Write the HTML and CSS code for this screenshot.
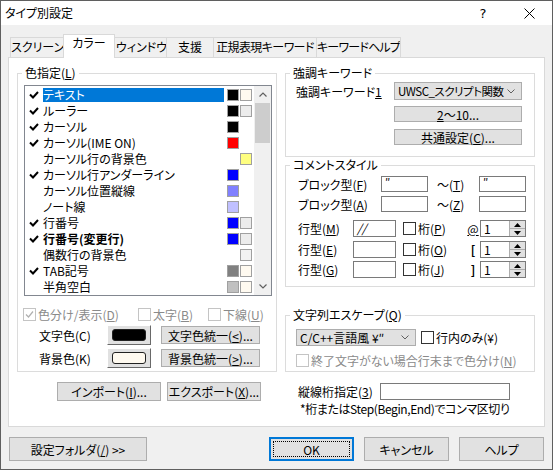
FILE: index.html
```html
<!DOCTYPE html>
<html lang="ja">
<head>
<meta charset="utf-8">
<title>タイプ別設定</title>
<link rel="stylesheet" href="styles.css">
</head>
<body>
<div class="window">
  <div class="titlebar">
    <div class="title">タイプ別設定</div>
    <div class="tb-btn">?</div>
    <div class="tb-btn"><svg width="11" height="11" viewBox="0 0 11 11"><path d="M0.5 0.5L10.5 10.5M10.5 0.5L0.5 10.5" stroke="#000" stroke-width="1" fill="none"/></svg></div>
  </div>
  <div class="content">
    <div class="tabs">
      <div class="tab t1">スクリーン</div>
      <div class="tab t2 active">カラー</div>
      <div class="tab t3">ウィンドウ</div>
      <div class="tab t4">支援</div>
      <div class="tab t5">正規表現キーワード</div>
      <div class="tab t6">キーワードヘルプ</div>
    </div>
    <div class="panel">
      <div class="col-left">
        <fieldset class="group g-color">
          <legend>色指定(<u>L</u>)</legend>
          <div class="listbox">
            <div class="rows">
              <div class="item"><span class="chk"><svg width="10" height="8" viewBox="0 0 10 8"><path d="M1 3.5L4 6.5L9 1" stroke="#000" stroke-width="2" fill="none"/></svg></span><span class="lbl"><span class="sel">テキスト</span></span><span class="sw c-black"></span><span class="sw c-cream"></span></div>
              <div class="item"><span class="chk"><svg width="10" height="8" viewBox="0 0 10 8"><path d="M1 3.5L4 6.5L9 1" stroke="#000" stroke-width="2" fill="none"/></svg></span><span class="lbl">ルーラー</span><span class="sw c-black"></span><span class="sw c-light"></span></div>
              <div class="item"><span class="chk"><svg width="10" height="8" viewBox="0 0 10 8"><path d="M1 3.5L4 6.5L9 1" stroke="#000" stroke-width="2" fill="none"/></svg></span><span class="lbl">カーソル</span><span class="sw c-black"></span><span class="sw none"></span></div>
              <div class="item"><span class="chk"><svg width="10" height="8" viewBox="0 0 10 8"><path d="M1 3.5L4 6.5L9 1" stroke="#000" stroke-width="2" fill="none"/></svg></span><span class="lbl">カーソル(IME ON)</span><span class="sw c-red"></span><span class="sw none"></span></div>
              <div class="item"><span class="chk"></span><span class="lbl">カーソル行の背景色</span><span class="sw none"></span><span class="sw c-yellow"></span></div>
              <div class="item"><span class="chk"><svg width="10" height="8" viewBox="0 0 10 8"><path d="M1 3.5L4 6.5L9 1" stroke="#000" stroke-width="2" fill="none"/></svg></span><span class="lbl">カーソル行アンダーライン</span><span class="sw c-blue"></span><span class="sw none"></span></div>
              <div class="item"><span class="chk"></span><span class="lbl">カーソル位置縦線</span><span class="sw c-blue2"></span><span class="sw none"></span></div>
              <div class="item"><span class="chk"></span><span class="lbl">ノート線</span><span class="sw c-blue3"></span><span class="sw none"></span></div>
              <div class="item"><span class="chk"><svg width="10" height="8" viewBox="0 0 10 8"><path d="M1 3.5L4 6.5L9 1" stroke="#000" stroke-width="2" fill="none"/></svg></span><span class="lbl">行番号</span><span class="sw c-blue"></span><span class="sw c-light"></span></div>
              <div class="item"><span class="chk"><svg width="10" height="8" viewBox="0 0 10 8"><path d="M1 3.5L4 6.5L9 1" stroke="#000" stroke-width="2" fill="none"/></svg></span><span class="lbl bold">行番号(変更行)</span><span class="sw c-blue"></span><span class="sw c-light"></span></div>
              <div class="item"><span class="chk"></span><span class="lbl">偶数行の背景色</span><span class="sw none"></span><span class="sw c-light2"></span></div>
              <div class="item"><span class="chk"><svg width="10" height="8" viewBox="0 0 10 8"><path d="M1 3.5L4 6.5L9 1" stroke="#000" stroke-width="2" fill="none"/></svg></span><span class="lbl">TAB記号</span><span class="sw c-gray"></span><span class="sw c-cream"></span></div>
              <div class="item"><span class="chk"></span><span class="lbl">半角空白</span><span class="sw c-silver"></span><span class="sw c-cream"></span></div>
            </div>
            <div class="vscroll">
              <div class="vs-btn"><svg width="8" height="5" viewBox="0 0 8 5"><path d="M0.5 4.5L4 1L7.5 4.5" stroke="#606060" stroke-width="1.2" fill="none"/></svg></div>
              <div class="vs-thumb"></div>
              <div class="vs-fill"></div>
              <div class="vs-btn"><svg width="8" height="5" viewBox="0 0 8 5"><path d="M0.5 0.5L4 4L7.5 0.5" stroke="#606060" stroke-width="1.2" fill="none"/></svg></div>
            </div>
          </div>
          <div class="flags">
            <div class="flag f1"><span class="cb dis"><svg width="11" height="11" viewBox="0 0 11 11"><path d="M2 5.5L4.5 8L9 2.5" stroke="#b0b0b0" stroke-width="1.2" fill="none"/></svg></span><span class="dis-text">色分け/表示(<u>D</u>)</span></div>
            <div class="flag f2"><span class="cb dis"></span><span class="dis-text">太字(<u>B</u>)</span></div>
            <div class="flag f3"><span class="cb dis"></span><span class="dis-text">下線(<u>U</u>)</span></div>
          </div>
          <div class="crow r1">
            <span class="clabel">文字色(C)</span>
            <span class="colorbtn"><span class="inner c-black"></span></span>
            <span class="btn unify">文字色統一(<u>&lt;</u>)...</span>
          </div>
          <div class="crow r2">
            <span class="clabel">背景色(K)</span>
            <span class="colorbtn"><span class="inner c-cream"></span></span>
            <span class="btn unify">背景色統一(<u>&gt;</u>)...</span>
          </div>
        </fieldset>
        <div class="iorow">
          <span class="btn b-import">インポート(<u>I</u>)...</span>
          <span class="btn b-export">エクスポート(<u>X</u>)...</span>
        </div>
      </div>
      <div class="col-right">
        <fieldset class="group g-kw">
          <legend>強調キーワード</legend>
          <div class="kwrow">
            <span class="kwlabel">強調キーワード<u>1</u></span>
            <span class="combo kwcombo"><span class="ctext">UWSC_スクリプト関数</span><svg width="8" height="5" viewBox="0 0 8 5"><path d="M0.5 0.5L4 4L7.5 0.5" stroke="#606060" stroke-width="1" fill="none"/></svg></span>
          </div>
          <span class="btn kwbtn b2"><span><u>2</u>～10...</span></span>
          <span class="btn kwbtn b3">共通設定(<u>C</u>)...</span>
        </fieldset>
        <fieldset class="group g-cm">
          <legend>コメントスタイル</legend>
          <div class="cmrow ra">
            <span class="cmlabel">ブロック型(<u>F</u>)</span>
            <span class="edit e-blk">″</span>
            <span class="tilde">～(<u>T</u>)</span>
            <span class="edit e-blk">″</span>
          </div>
          <div class="cmrow rb">
            <span class="cmlabel">ブロック型(<u>A</u>)</span>
            <span class="edit e-blk"></span>
            <span class="tilde">～(<u>Z</u>)</span>
            <span class="edit e-blk"></span>
          </div>
          <div class="cmrow rl rm">
            <span class="llabel">行型(<u>M</u>)</span>
            <span class="edit e-line">//</span>
            <span class="cb en"></span>
            <span class="keta">桁(<u>P</u>)</span>
            <span class="sym"><u>@</u></span>
            <span class="spin"><span class="val">1</span><span class="arrows"><span class="ar"><svg width="7" height="4" viewBox="0 0 7 4"><path d="M0 4L3.5 0L7 4Z" fill="#000"/></svg></span><span class="ar"><svg width="7" height="4" viewBox="0 0 7 4"><path d="M0 0L3.5 4L7 0Z" fill="#000"/></svg></span></span></span>
          </div>
          <div class="cmrow rl re">
            <span class="llabel">行型(<u>E</u>)</span>
            <span class="edit e-line"></span>
            <span class="cb en"></span>
            <span class="keta">桁(<u>O</u>)</span>
            <span class="sym bold">[</span>
            <span class="spin"><span class="val">1</span><span class="arrows"><span class="ar"><svg width="7" height="4" viewBox="0 0 7 4"><path d="M0 4L3.5 0L7 4Z" fill="#000"/></svg></span><span class="ar"><svg width="7" height="4" viewBox="0 0 7 4"><path d="M0 0L3.5 4L7 0Z" fill="#000"/></svg></span></span></span>
          </div>
          <div class="cmrow rl rg">
            <span class="llabel">行型(<u>G</u>)</span>
            <span class="edit e-line"></span>
            <span class="cb en"></span>
            <span class="keta">桁(<u>J</u>)</span>
            <span class="sym bold">]</span>
            <span class="spin"><span class="val">1</span><span class="arrows"><span class="ar"><svg width="7" height="4" viewBox="0 0 7 4"><path d="M0 4L3.5 0L7 4Z" fill="#000"/></svg></span><span class="ar"><svg width="7" height="4" viewBox="0 0 7 4"><path d="M0 0L3.5 4L7 0Z" fill="#000"/></svg></span></span></span>
          </div>
        </fieldset>
        <fieldset class="group g-esc">
          <legend>文字列エスケープ(<u>Q</u>)</legend>
          <div class="escrow">
            <span class="combo esccombo"><span class="ctext">C/C++言語風 ¥″</span><svg width="8" height="5" viewBox="0 0 8 5"><path d="M0.5 0.5L4 4L7.5 0.5" stroke="#606060" stroke-width="1" fill="none"/></svg></span>
            <span class="cb en"></span>
            <span class="inline-only">行内のみ(¥)</span>
          </div>
          <div class="escrow2">
            <span class="cb dis"></span>
            <span class="dis-text">終了文字がない場合行末まで色分け(<u>N</u>)</span>
          </div>
        </fieldset>
        <div class="vline">
          <span class="vlabel">縦線桁指定(<u>3</u>)</span>
          <span class="edit e-vline"></span>
        </div>
        <div class="note">*桁またはStep(Begin,End)でコンマ区切り</div>
      </div>
    </div>
    <div class="footer">
      <span class="btn fbtn b-folder">設定フォルダ(<u>/</u>) &gt;&gt;</span>
      <span class="spacer"></span>
      <span class="btn fbtn b-ok"><span class="focus">OK</span></span>
      <span class="btn fbtn b-cancel">キャンセル</span>
      <span class="btn fbtn b-help">ヘルプ</span>
    </div>
  </div>
</div>
</body>
</html>
```

FILE: styles.css
```css
* { box-sizing: border-box; }
html, body { margin: 0; padding: 0; }
body {
  font-family: "Noto Sans CJK JP", "Noto Sans", sans-serif;
  font-size: 12px;
  color: #000;
  background: #f0f0f0;
  font-feature-settings: "palt";
}
u { text-decoration: underline; text-underline-offset: 1px; }

.window {
  width: 553px;
  height: 470px;
  border: 1px solid #5f5f5f;
  background: #f0f0f0;
  display: flex;
  flex-direction: column;
  overflow: hidden;
}
.titlebar {
  height: 24px;
  flex: none;
  background: #fff;
  display: flex;
  align-items: center;
  padding-left: 4px;
}
.title { flex: 1; line-height: 16px; }
.tb-btn {
  width: 46px;
  height: 24px;
  display: flex;
  align-items: center;
  justify-content: center;
  font-family: "DejaVu Sans", sans-serif;
  font-size: 13px;
}

.content { flex: 1; padding: 9px 7px 0 7px; }

.tabs {
  display: flex;
  align-items: flex-end;
  height: 24px;
  padding-left: 2px;
  margin-bottom: -1px;
  position: relative;
  z-index: 1;
}
.tab {
  height: 21px;
  border: 1px solid #d9d9d9;
  background: #f0f0f0;
  line-height: 17px;
  text-align: center;
  white-space: nowrap;
  flex: none;
  overflow: hidden;
}
.t1 { width: 55px; }
.t2 { width: 52px; }
.t3 { width: 54px; padding-left: 2px; }
.t4 { width: 48px; margin-left: -1px; }
.t5 { width: 104px; margin-left: -1px; letter-spacing: -0.6px; }
.t6 { width: 85px; margin-left: -1px; letter-spacing: -0.8px; }
.tab.active {
  height: 24px;
  margin: 0 -2px;
  border-bottom: none;
  background: #fff;
  position: relative;
  z-index: 2;
  line-height: 15px;
}

.panel {
  height: 370px;
  border: 1px solid #d9d9d9;
  background: #fff;
  display: flex;
  gap: 8px;
  padding: 7px 9px 0 8px;
}
.col-left { width: 260px; flex: none; display: flex; flex-direction: column; }
.col-right { width: 250px; flex: none; display: flex; flex-direction: column; }

.group {
  margin: 0;
  border: 1px solid #dcdcdc;
  min-width: 0;
}
.group legend { line-height: 16px; padding: 0 3px; }

.g-color { height: 307px; padding: 4px 4px 0 6px; }
.g-color legend { margin-left: -2px; }

.listbox {
  width: 248px;
  height: 211px;
  border: 1px solid #828790;
  background: #fff;
  display: flex;
}
.rows { flex: 1; padding-top: 1px; overflow: hidden; }
.item { height: 16px; display: flex; align-items: center; }
.chk { width: 18px; height: 16px; display: flex; align-items: center; padding-left: 4px; flex: none; }
.lbl { width: 181px; flex: none; height: 16px; line-height: 16px; white-space: nowrap; }
.lbl.bold { font-weight: bold; }
.sel { display: block; background: #0078d7; color: #fff; height: 14px; line-height: 14px; margin-top: 1px; }
.sw { width: 12px; height: 12px; border: 1px solid #a0a0a0; flex: none; margin-left: 3px; }
.sw + .sw { margin-left: 1px; }
.sw.none { border-color: transparent; }
.c-black { background: #000; }
.c-cream { background: #fffaf0; }
.c-light { background: #ececec; }
.c-light2 { background: #f2f2f2; }
.c-red { background: #ff0000; }
.c-yellow { background: #ffff80; }
.c-blue { background: #0000ff; }
.c-blue2 { background: #8080ff; }
.c-blue3 { background: #c0c0ff; }
.c-gray { background: #808080; }
.c-silver { background: #c0c0c0; }

.vscroll { width: 17px; flex: none; background: #f0f0f0; display: flex; flex-direction: column; }
.vs-btn { height: 17px; display: flex; align-items: center; justify-content: center; }
.vs-thumb { height: 40px; background: #cdcdcd; margin: 0 1px; }
.vs-fill { flex: 1; }

.cb {
  width: 13px;
  height: 13px;
  border: 1px solid #333;
  background: #fff;
  flex: none;
  display: flex;
  align-items: center;
  justify-content: center;
}
.cb.dis { border-color: #c4c4c4; background: #fff; }
.dis-text { color: #8a8a8a; white-space: nowrap; }

.flags { display: flex; align-items: center; height: 13px; margin-top: 12px; margin-left: -1px; }
.flag { display: flex; align-items: center; gap: 2px; line-height: 13px; }
.f1 { width: 115px; }
.f2 { width: 70px; }

.crow { display: flex; align-items: center; height: 20px; padding-left: 15px; }
.r1 { margin-top: 4px; }
.r2 { margin-top: 3px; }
.clabel { width: 68px; flex: none; }
.colorbtn {
  width: 44px;
  height: 20px;
  flex: none;
  background: #e1e1e1;
  border: 1px solid;
  border-color: #fff #696969 #696969 #fff;
  padding: 3px 4px;
}
.colorbtn .inner { display: block; height: 12px; border: 1px solid #222; border-radius: 3px; }

.btn {
  display: flex;
  align-items: center;
  justify-content: center;
  background: #e1e1e1;
  border: 1px solid #adadad;
  white-space: nowrap;
  flex: none;
}
.unify { width: 99px; height: 18px; margin-left: 10px; }

.iorow { display: flex; margin-top: 10px; padding-left: 40px; gap: 6px; }
.b-import { width: 104px; height: 19px; }
.b-export { width: 94px; height: 19px; }

.g-kw { height: 92px; padding: 1px 12px 0 10px; }
.g-kw legend { margin-left: -6px; }
.kwrow { display: flex; align-items: center; height: 18px; }
.kwlabel { width: 98px; flex: none; }
.combo {
  display: flex;
  align-items: center;
  background: #e1e1e1;
  border: 1px solid #adadad;
  padding: 0 6px 0 3px;
  flex: none;
}
.combo .ctext { flex: 1; white-space: nowrap; overflow: hidden; }
.kwcombo { width: 128px; height: 18px; }
.kwcombo .ctext { font-size: 11.5px; letter-spacing: -0.5px; }
.kwbtn { width: 128px; height: 16px; margin-left: 98px; }
.b2 { margin-top: 6px; }
.b3 { margin-top: 7px; }

.g-cm { height: 130px; padding: 3px 8px 0 12px; }
.g-cm legend { margin-left: -8px; }
.cmrow { display: flex; align-items: center; height: 16px; }
.rb { margin-top: 4px; }
.cmlabel { width: 83px; flex: none; }
.edit {
  background: #fff;
  border: 1px solid #7a7a7a;
  flex: none;
  padding-left: 3px;
  line-height: 14px;
}
.e-blk { width: 47px; height: 16px; font-size: 11px; line-height: 11px; }
.tilde { width: 42px; margin-left: 9px; flex: none; }
.rl { height: 17px; }
.rm { margin-top: 8px; }
.re { margin-top: 4px; }
.rg { margin-top: 3px; }
.llabel { width: 55px; flex: none; }
.e-line { width: 43px; height: 17px; font-style: italic; }
.cmrow .cb { margin-left: 7px; }
.keta { width: 48px; margin-left: 2px; flex: none; }
.sym { width: 14px; text-align: center; flex: none; }
.sym.bold { font-weight: bold; }
.spin { display: flex; width: 46px; height: 17px; border: 1px solid #7a7a7a; background: #fff; flex: none; }
.spin .val { flex: 1; padding-left: 3px; line-height: 15px; }
.spin .arrows { width: 16px; display: flex; flex-direction: column; background: #e1e1e1; border-left: 1px solid #adadad; }
.spin .ar { flex: 1; display: flex; align-items: center; justify-content: center; }
.spin .ar + .ar { border-top: 1px solid #adadad; }

.g-esc { height: 65px; margin-top: 20px; padding: 6px 8px 0 10px; }
.g-esc legend { margin-left: -6px; }
.escrow { display: flex; align-items: center; height: 17px; }
.esccombo { width: 120px; height: 17px; }
.escrow .cb { margin-left: 5px; }
.inline-only { margin-left: 2px; }
.escrow2 { display: flex; align-items: center; gap: 2px; height: 14px; margin-top: 7px; }

.vline { display: flex; align-items: center; height: 17px; margin-top: 11px; padding-left: 13px; }
.vlabel { width: 82px; flex: none; }
.e-vline { width: 130px; height: 17px; }
.note { height: 17px; line-height: 17px; padding-left: 15px; white-space: nowrap; letter-spacing: -0.4px; }

.footer { display: flex; margin-top: 10px; padding: 0 1px; }
.fbtn { height: 24px; width: 85px; }
.b-folder { width: 138px; }
.spacer { flex: 1; }
.b-ok { margin-right: 10px; border: 2px solid #0078d7; padding: 2px; }
.b-ok .focus { width: 100%; height: 100%; border: 1px dotted #000; display: flex; align-items: center; justify-content: center; }
.b-cancel { margin-right: 10px; }
```
